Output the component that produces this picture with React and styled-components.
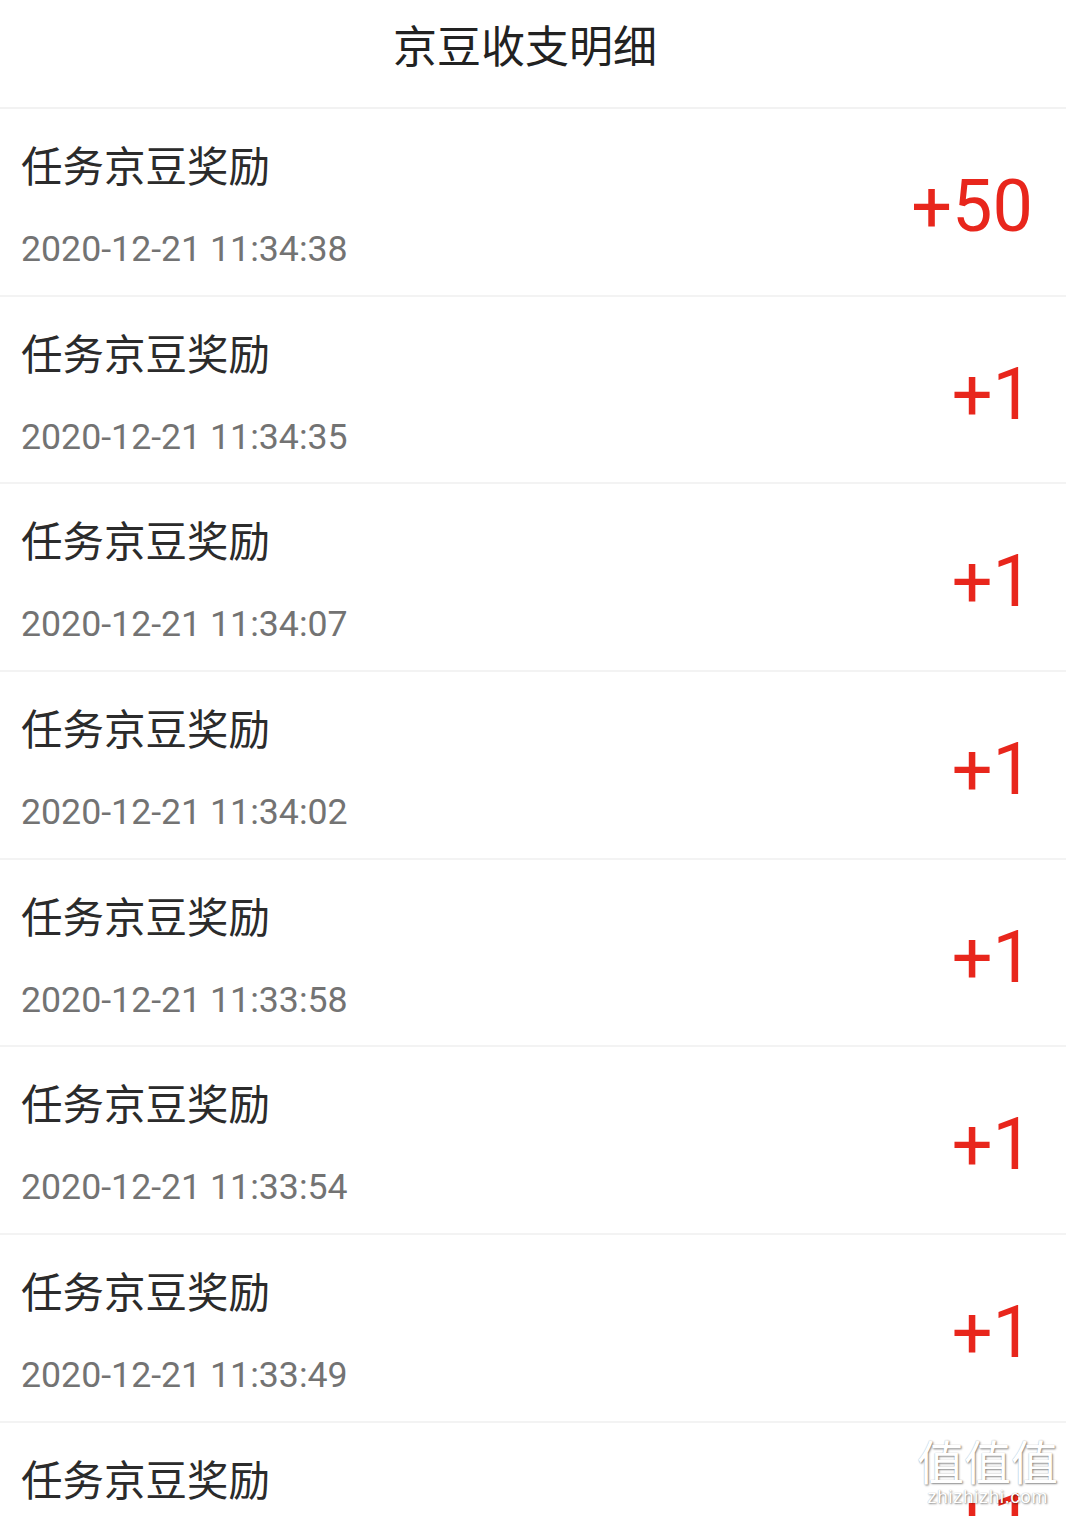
import React from 'react';
import styled, { createGlobalStyle } from 'styled-components';

const records = [
  { title: '任务京豆奖励', time: '2020-12-21 11:34:38', amount: '+50' },
  { title: '任务京豆奖励', time: '2020-12-21 11:34:35', amount: '+1' },
  { title: '任务京豆奖励', time: '2020-12-21 11:34:07', amount: '+1' },
  { title: '任务京豆奖励', time: '2020-12-21 11:34:02', amount: '+1' },
  { title: '任务京豆奖励', time: '2020-12-21 11:33:58', amount: '+1' },
  { title: '任务京豆奖励', time: '2020-12-21 11:33:54', amount: '+1' },
  { title: '任务京豆奖励', time: '2020-12-21 11:33:49', amount: '+1' },
  { title: '任务京豆奖励', time: '2020-12-21 11:33:45', amount: '+1' },
];

const App = () => (
  <>
    <GlobalStyles />
    <Page>
      <Header>
        <HeaderTitle>京豆收支明细</HeaderTitle>
      </Header>
      <List>
        {records.map((r, i) => (
          <Row key={i}>
            <Info>
              <Title>{r.title}</Title>
              <Time>{r.time}</Time>
            </Info>
            <Amount>{r.amount}</Amount>
          </Row>
        ))}
      </List>
      <Watermark>
        <WatermarkMark>值值值</WatermarkMark>
        <WatermarkUrl>zhizhizhi.com</WatermarkUrl>
      </Watermark>
    </Page>
  </>
);

const GlobalStyles = createGlobalStyle`
  * {
    box-sizing: border-box;
    margin: 0;
    padding: 0;
  }

  html, body {
    height: 100%;
    overflow: hidden;
    background: #fff;
    font-family: Roboto, 'Noto Sans CJK SC', sans-serif;
  }
`;

const Page = styled.div`
  position: relative;
  width: 1066px;
  height: 1516px;
  overflow: hidden;
  background: #fff;
`;

const Header = styled.header`
  height: 109px;
  padding: 0 16px 12px 0;
  display: flex;
  align-items: center;
  justify-content: center;
  border-bottom: 2px solid #f2f2f2;
`;

const HeaderTitle = styled.h1`
  font-size: 44px;
  font-weight: 400;
  line-height: 1;
  color: #222;
`;

const List = styled.div`
  display: flex;
  flex-direction: column;
`;

const Row = styled.div`
  height: 187.7px;
  flex-shrink: 0;
  display: flex;
  align-items: flex-start;
  justify-content: space-between;
  padding: 0 33px 0 21px;
  border-bottom: 2px solid #f3f3f3;
`;

const Info = styled.div`
  display: flex;
  flex-direction: column;
  padding-top: 34px;
  gap: 34px;
`;

const Title = styled.div`
  font-size: 41.5px;
  line-height: 50px;
  color: #2b2b2b;
`;

const Time = styled.div`
  font-size: 35.7px;
  line-height: 44px;
  color: #737373;
`;

const Amount = styled.div`
  margin-top: 62px;
  font-size: 72px;
  line-height: 72px;
  color: #e8261c;
`;

const Watermark = styled.div`
  position: absolute;
  right: 8px;
  bottom: 8px;
  display: flex;
  flex-direction: column;
  align-items: center;
  color: #fff;
  text-shadow: 1px 1px 2px rgba(0, 0, 0, 0.45), 0 0 1px rgba(0, 0, 0, 0.3);
`;

const WatermarkMark = styled.div`
  font-size: 47px;
  line-height: 52px;
  font-family: 'Noto Sans CJK SC', sans-serif;
`;

const WatermarkUrl = styled.div`
  font-size: 19px;
  line-height: 22px;
  font-family: 'Liberation Sans', sans-serif;
  letter-spacing: 0.5px;
`;

export default App;
